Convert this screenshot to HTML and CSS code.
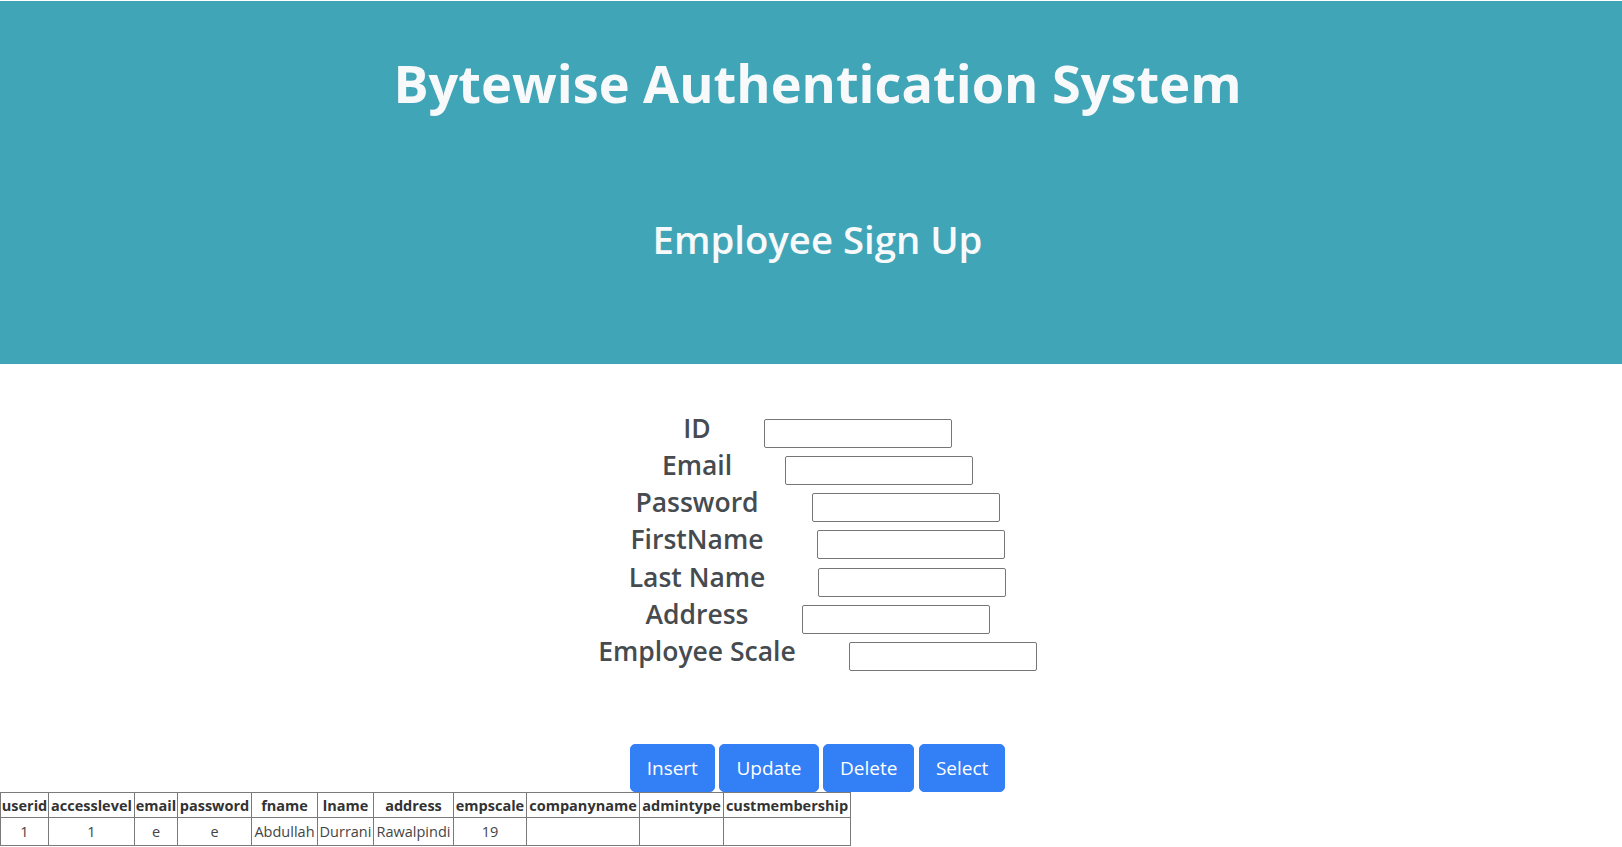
FILE: index.html
```html
<!DOCTYPE html>
<html lang="en">
<head>
<meta charset="utf-8">
<title>Employee Sign Up</title>
<link rel="stylesheet" href="styles.css">
</head>
<body>
<header class="banner">
  <h1 class="title">Bytewise Authentication System</h1>
  <h2 class="subtitle">Employee Sign Up</h2>
</header>

<form class="signup">
  <div class="field"><label class="field-label" for="id">ID</label><input class="field-input" id="id" type="text"></div>
  <div class="field"><label class="field-label" for="email">Email</label><input class="field-input" id="email" type="text"></div>
  <div class="field"><label class="field-label" for="password">Password</label><input class="field-input" id="password" type="password"></div>
  <div class="field"><label class="field-label" for="fname">FirstName</label><input class="field-input" id="fname" type="text"></div>
  <div class="field"><label class="field-label" for="lname">Last Name</label><input class="field-input" id="lname" type="text"></div>
  <div class="field"><label class="field-label" for="address">Address</label><input class="field-input" id="address" type="text"></div>
  <div class="field"><label class="field-label" for="scale">Employee Scale</label><input class="field-input" id="scale" type="text"></div>

  <div class="actions">
    <button class="btn" type="button">Insert</button>
    <button class="btn" type="button">Update</button>
    <button class="btn" type="button">Delete</button>
    <button class="btn" type="button">Select</button>
  </div>
</form>

<table class="records">
  <colgroup>
    <col class="c-userid"><col class="c-access"><col class="c-email"><col class="c-pass">
    <col class="c-fname"><col class="c-lname"><col class="c-addr"><col class="c-scale">
    <col class="c-company"><col class="c-admin"><col class="c-cust">
  </colgroup>
  <thead>
    <tr><th>userid</th><th>accesslevel</th><th>email</th><th>password</th><th>fname</th><th>lname</th><th>address</th><th>empscale</th><th>companyname</th><th>admintype</th><th>custmembership</th></tr>
  </thead>
  <tbody>
    <tr><td>1</td><td>1</td><td>e</td><td>e</td><td>Abdullah</td><td>Durrani</td><td>Rawalpindi</td><td>19</td><td></td><td></td><td></td></tr>
  </tbody>
</table>
</body>
</html>
```
FILE: styles.css
```css
* { box-sizing: border-box; }

body {
  margin: 0;
  font-family: "Open Sans", "Noto Sans", sans-serif;
  color: #212529;
  background: #fff;
}

.banner {
  margin-top: 1px;
  height: 363px;
  background: #40a5b7;
  color: #f8f9fa;
  text-align: center;
  padding-top: 52px;
  padding-left: 13px;
}

.title {
  margin: 0;
  font-size: 52.3px;
  font-weight: 700;
  line-height: 60px;
}

.subtitle {
  margin: 104px 0 0;
  font-size: 38.3px;
  font-weight: 600;
  line-height: 44px;
}

.signup {
  padding-top: 46px;
  padding-left: 13px;
}

.field {
  display: flex;
  justify-content: center;
  align-items: flex-start;
  gap: 53px;
  height: 37.17px;
}

.field-label {
  font-size: 26.5px;
  font-weight: 600;
  line-height: 37px;
  color: #464b50;
}

.field-input {
  margin-top: 9px;
  width: 188px;
  height: 29px;
  border: 1px solid #767676;
  border-radius: 2px;
  background: #fff;
}

.actions {
  display: flex;
  justify-content: center;
  gap: 4.5px;
  margin-top: 74px;
}

.btn {
  font-family: inherit;
  font-size: 19px;
  line-height: 30px;
  padding: 8px 16px;
  color: #fff;
  background: #3380f6;
  border: 1px solid #3380f6;
  border-radius: 5px;
}

.records {
  border-collapse: collapse;
  table-layout: fixed;
  width: 851px;
  font-size: 14.5px;
  color: #444;
}

.records th, .records td {
  border: 1px solid #7a7a7a;
  padding: 0;
  text-align: center;
  white-space: nowrap;
}

.records th { height: 25px; font-weight: 700; color: #333; }
.records td { height: 28px; }

.c-userid { width: 48px; }
.c-access { width: 86px; }
.c-email { width: 43px; }
.c-pass { width: 74px; }
.c-fname { width: 66px; }
.c-lname { width: 56px; }
.c-addr { width: 80px; }
.c-scale { width: 73px; }
.c-company { width: 113px; }
.c-admin { width: 84px; }
.c-cust { width: 127px; }
```
